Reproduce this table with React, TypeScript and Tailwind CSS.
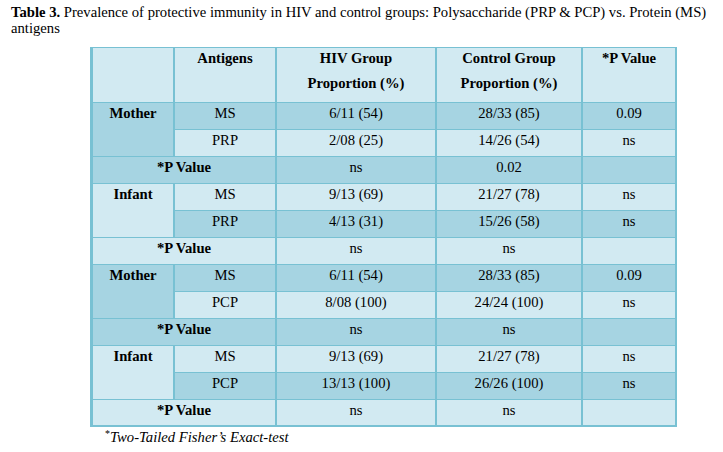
import React from 'react';

type Block = {
  group: string;
  rows: { antigen: string; hiv: string; control: string; p: string }[];
  hivP: string;
  controlP: string;
};

const blocks: Block[] = [
  {
    group: 'Mother',
    rows: [
      { antigen: 'MS', hiv: '6/11 (54)', control: '28/33 (85)', p: '0.09' },
      { antigen: 'PRP', hiv: '2/08 (25)', control: '14/26 (54)', p: 'ns' },
    ],
    hivP: 'ns',
    controlP: '0.02',
  },
  {
    group: 'Infant',
    rows: [
      { antigen: 'MS', hiv: '9/13 (69)', control: '21/27 (78)', p: 'ns' },
      { antigen: 'PRP', hiv: '4/13 (31)', control: '15/26 (58)', p: 'ns' },
    ],
    hivP: 'ns',
    controlP: 'ns',
  },
  {
    group: 'Mother',
    rows: [
      { antigen: 'MS', hiv: '6/11 (54)', control: '28/33 (85)', p: '0.09' },
      { antigen: 'PCP', hiv: '8/08 (100)', control: '24/24 (100)', p: 'ns' },
    ],
    hivP: 'ns',
    controlP: 'ns',
  },
  {
    group: 'Infant',
    rows: [
      { antigen: 'MS', hiv: '9/13 (69)', control: '21/27 (78)', p: 'ns' },
      { antigen: 'PCP', hiv: '13/13 (100)', control: '26/26 (100)', p: 'ns' },
    ],
    hivP: 'ns',
    controlP: 'ns',
  },
];

const serif = "font-['Liberation_Serif','Times_New_Roman',serif] text-[14.67px]";
const light = 'bg-[#d2eaf2]';
const dark = 'bg-[#a6d4e2]';
const cell = `${serif} border-r-2 border-b border-[#78c1d3] h-[27px] p-0 align-top text-center leading-[20px] font-normal`;
const head = `${serif} border-r-2 border-b border-[#78c1d3] h-[55px] p-0 align-top text-center leading-[20px] font-bold bg-[#d2eaf2]`;

export default function App() {
  return (
    <div className={`w-[723px] h-[452px] bg-white text-black ${serif}`}>
      <p className={`${serif} pt-[4px] pl-[11px] pr-[6px] leading-[16px]`}>
        <b>Table 3.</b> Prevalence of protective immunity in HIV and control groups: Polysaccharide (PRP &amp; PCP) vs. Protein (MS) antigens
      </p>

      <div className="pl-[90px] mt-[11px]">
        <table className={`${serif} table-fixed w-[587px] border-separate border-spacing-0 border-l-[3px] border-t border-[#78c1d3] text-black`}>
          <thead>
            <tr>
              <th className={`${head} w-[82px]`}></th>
              <th className={`${head} w-[102px]`}>Antigens</th>
              <th className={`${head} w-[160px]`}>
                <div>HIV Group</div>
                <div className="mt-[5px]">Proportion (%)</div>
              </th>
              <th className={`${head} w-[146px]`}>
                <div>Control Group</div>
                <div className="mt-[5px]">Proportion (%)</div>
              </th>
              <th className={`${head} w-[94px]`}>*P Value</th>
            </tr>
          </thead>
          <tbody>
            {blocks.map((b, i) => {
              const first = i % 2 === 0 ? dark : light;
              const second = i % 2 === 0 ? light : dark;
              const edge = i === blocks.length - 1 ? 'border-b-2' : '';
              return (
                <React.Fragment key={i}>
                  <tr className={first}>
                    <td rowSpan={2} className={`${cell} !font-bold ${first}`}>{b.group}</td>
                    <td className={cell}>{b.rows[0].antigen}</td>
                    <td className={cell}>{b.rows[0].hiv}</td>
                    <td className={cell}>{b.rows[0].control}</td>
                    <td className={cell}>{b.rows[0].p}</td>
                  </tr>
                  <tr className={second}>
                    <td className={cell}>{b.rows[1].antigen}</td>
                    <td className={cell}>{b.rows[1].hiv}</td>
                    <td className={cell}>{b.rows[1].control}</td>
                    <td className={cell}>{b.rows[1].p}</td>
                  </tr>
                  <tr className={first}>
                    <td colSpan={2} className={`${cell} !font-bold ${edge}`}>*P Value</td>
                    <td className={`${cell} ${edge}`}>{b.hivP}</td>
                    <td className={`${cell} ${edge}`}>{b.controlP}</td>
                    <td className={`${cell} ${edge}`}></td>
                  </tr>
                </React.Fragment>
              );
            })}
          </tbody>
        </table>
        <p className={`${serif} mt-[2px] pl-[15px] leading-[16px]`}>
          <span className="relative -top-[5px] text-[10px]">*</span>
          <i>Two-Tailed Fisher’s Exact-test</i>
        </p>
      </div>
    </div>
  );
}
